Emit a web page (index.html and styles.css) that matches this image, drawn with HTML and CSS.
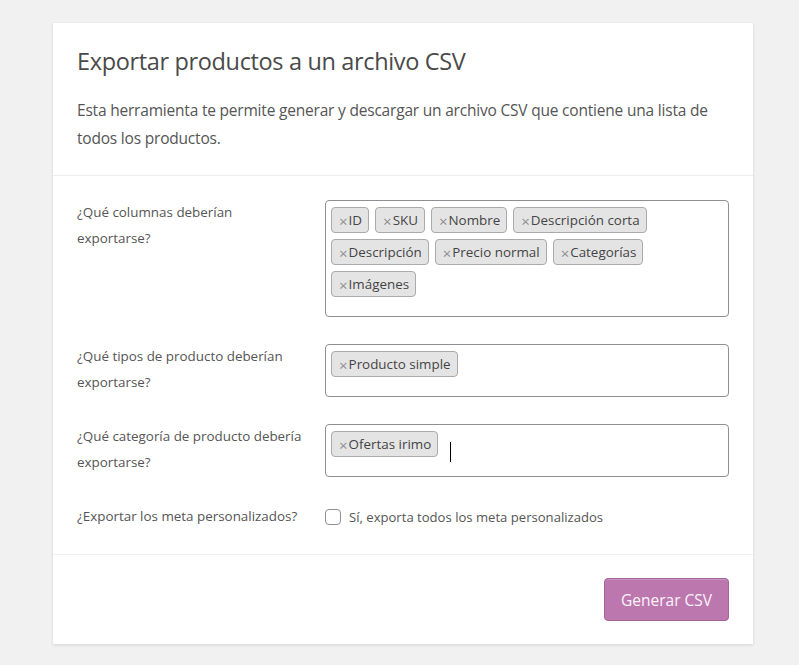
FILE: index.html
```html
<!DOCTYPE html>
<html lang="es">
<head>
<meta charset="utf-8">
<title>Exportar productos</title>
<link rel="stylesheet" href="styles.css">
</head>
<body>
<div class="card">
  <header class="intro">
    <h2 class="title">Exportar productos a un archivo CSV</h2>
    <p class="desc">Esta herramienta te permite generar y descargar un archivo CSV que contiene una lista de<br>todos los productos.</p>
  </header>
  <section class="form">
    <div class="row">
      <div class="label">¿Qué columnas deberían<br>exportarse?</div>
      <div class="field">
        <span class="tag"><span class="x">×</span>ID</span>
        <span class="tag"><span class="x">×</span>SKU</span>
        <span class="tag"><span class="x">×</span>Nombre</span>
        <span class="tag"><span class="x">×</span>Descripción corta</span>
        <span class="tag"><span class="x">×</span>Descripción</span>
        <span class="tag"><span class="x">×</span>Precio normal</span>
        <span class="tag"><span class="x">×</span>Categorías</span>
        <span class="tag"><span class="x">×</span>Imágenes</span>
      </div>
    </div>
    <div class="row">
      <div class="label">¿Qué tipos de producto deberían<br>exportarse?</div>
      <div class="field">
        <span class="tag"><span class="x">×</span>Producto simple</span>
      </div>
    </div>
    <div class="row">
      <div class="label">¿Qué categoría de producto debería<br>exportarse?</div>
      <div class="field">
        <span class="tag"><span class="x">×</span>Ofertas irimo</span>
        <span class="caret"></span>
      </div>
    </div>
    <div class="row">
      <div class="label">¿Exportar los meta personalizados?</div>
      <label class="check"><span class="box"></span>Sí, exporta todos los meta personalizados</label>
    </div>
  </section>
  <footer class="actions">
    <button class="btn" type="button">Generar CSV</button>
  </footer>
</div>
</body>
</html>
```
FILE: styles.css
```css
html, body {
  margin: 0;
  padding: 0;
}
body {
  background: #f1f1f1;
  font-family: "Open Sans", "Noto Sans", sans-serif;
  color: #555;
  width: 799px;
  height: 665px;
  overflow: hidden;
}
.card {
  margin: 23px 0 0 53px;
  width: 700px;
  height: 621px;
  background: #fff;
  box-shadow: 0 1px 3px rgba(0, 0, 0, 0.13);
  display: flex;
  flex-direction: column;
}
.intro {
  padding: 23px 24px 23px;
  border-bottom: 1px solid #eee;
}
.title {
  margin: 0 0 20px;
  font-size: 23.5px;
  line-height: 30px;
  font-weight: 400;
  letter-spacing: -0.35px;
  color: #4a4a4a;
}
.desc {
  margin: 0;
  font-size: 15.5px;
  line-height: 28px;
  letter-spacing: -0.2px;
  color: #555;
}
.form {
  padding: 24px 24px 24px;
  border-bottom: 1px solid #eee;
  display: flex;
  flex-direction: column;
  gap: 27px;
}
.row {
  display: grid;
  grid-template-columns: 248px 404px;
  align-items: start;
}
.label {
  margin-top: -1px;
  font-size: 13.4px;
  line-height: 26px;
  color: #555;
}
.field {
  box-sizing: border-box;
  border: 1px solid #8c8f94;
  border-radius: 4px;
  padding: 6px 5px 19px;
  display: flex;
  flex-wrap: wrap;
  align-items: flex-start;
  gap: 6px;
}
.tag {
  box-sizing: border-box;
  height: 26px;
  display: inline-flex;
  align-items: center;
  padding: 0 6px 0 7px;
  background: #e4e4e4;
  border: 1px solid #aaa;
  border-radius: 4px;
  font-size: 13.4px;
  color: #444;
  white-space: nowrap;
}
.x {
  color: #8f8f8f;
  font-size: 15px;
  line-height: 1;
  margin-right: 1px;
  position: relative;
  top: 1px;
}
.caret {
  width: 1px;
  height: 20px;
  background: #000;
  margin: 11px 0 -5px 6px;
}
.check {
  display: flex;
  align-items: center;
  height: 26px;
  font-size: 13.1px;
  color: #555;
}
.box {
  box-sizing: border-box;
  width: 16px;
  height: 16px;
  border: 1px solid #8c8f94;
  border-radius: 4px;
  margin-right: 8px;
  background: #fff;
}
.actions {
  padding: 23px 24px 23px;
  display: flex;
  justify-content: flex-end;
}
.btn {
  box-sizing: border-box;
  width: 125px;
  height: 43px;
  background: #bb77ae;
  border: 1px solid #a36597;
  border-radius: 4px;
  box-shadow: inset 0 1px 0 rgba(255, 255, 255, 0.2);
  color: #fdf3fb;
  font-family: "Open Sans", "Noto Sans", sans-serif;
  font-size: 15.5px;
  padding: 0;
}
```
